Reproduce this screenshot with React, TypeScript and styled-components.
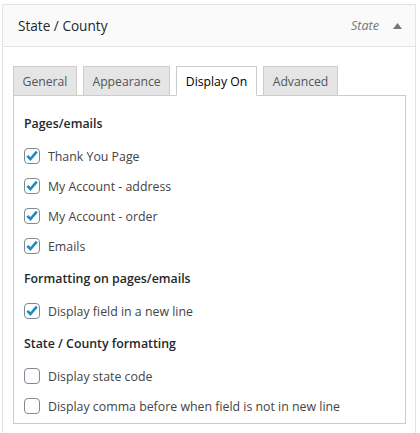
import React from 'react';
import styled, { createGlobalStyle } from 'styled-components';

const GlobalStyle = createGlobalStyle`
  body {
    margin: 0;
    background: #fff;
    font-family: 'Open Sans', 'Noto Sans', sans-serif;
    font-size: 12.35px;
    color: #444;
  }
`;

const FieldBox = styled.div`
  margin: 4px 4px 0 2px;
  border: 1px solid #e2e4e7;
  border-bottom: none;
  height: 429px;
  box-sizing: border-box;
`;

const FieldHeader = styled.div`
  height: 41px;
  display: flex;
  align-items: center;
  justify-content: space-between;
  padding: 0 13px 0 15px;
  background: #fafafa;
  border-bottom: 1px solid #e2e4e7;
`;

const FieldTitle = styled.span`
  font-size: 13.6px;
  font-weight: 500;
  color: #23282d;
`;

const FieldMeta = styled.div`
  display: flex;
  align-items: center;
  gap: 14px;
  color: #72777c;
`;

const FieldType = styled.em`
  font-size: 12.6px;
`;

const FieldBody = styled.div`
  padding: 19px 9px 0 10px;
`;

const TabList = styled.div`
  display: flex;
  gap: 6px;
  height: 30px;
  position: relative;
  z-index: 1;
`;

const Tab = styled.div<{ $active?: boolean; $width: number }>`
  width: ${(p) => p.$width}px;
  height: 30px;
  box-sizing: border-box;
  display: flex;
  align-items: center;
  justify-content: center;
  white-space: nowrap;
  border: 1px solid #ccc;
  border-bottom-color: ${(p) => (p.$active ? '#fff' : '#ccc')};
  background: ${(p) => (p.$active ? '#fff' : '#e5e5e5')};
  color: ${(p) => (p.$active ? '#000' : '#555')};
  font-size: 12.2px;
`;

const Panel = styled.div`
  border: 1px solid #ccc;
  margin-top: -1px;
  padding: 12px 10px 2px 10px;
`;

const SectionTitle = styled.div`
  font-weight: 600;
  color: #23282d;
  height: 30px;
  display: flex;
  align-items: center;
  margin: 2px 0 3px;

  &:first-child {
    margin-top: 0;
  }
`;

const CheckRow = styled.label`
  display: flex;
  align-items: center;
  gap: 8px;
  height: 30px;
  color: #444;
`;

const Box = styled.span`
  width: 16px;
  height: 16px;
  box-sizing: border-box;
  border: 1px solid #7e8993;
  border-radius: 4px;
  background: #fff;
  display: flex;
  align-items: center;
  justify-content: center;
  flex-shrink: 0;
`;

const Check: React.FC<{ label: string; checked?: boolean }> = ({ label, checked = false }) => (
  <CheckRow>
    <Box>
      {checked && (
        <svg width="14" height="14" viewBox="0 0 14 14">
          <path d="M2.3 6.8 L5.4 10 L11.8 2.6" fill="none" stroke="#1e8cbe" strokeWidth="2.6" />
        </svg>
      )}
    </Box>
    {label}
  </CheckRow>
);

const tabs = [
  { label: 'General', width: 64 },
  { label: 'Appearance', width: 87 },
  { label: 'Display On', width: 81, active: true },
  { label: 'Advanced', width: 75 },
];

export default function App() {
  return (
    <>
      <GlobalStyle />
      <FieldBox>
        <FieldHeader>
          <FieldTitle>State / County</FieldTitle>
          <FieldMeta>
            <FieldType>State</FieldType>
            <svg width="9" height="6" viewBox="0 0 9 6">
              <path d="M0 6 L4.5 0 L9 6 Z" fill="#72777c" />
            </svg>
          </FieldMeta>
        </FieldHeader>
        <FieldBody>
          <TabList>
            {tabs.map((t) => (
              <Tab key={t.label} $width={t.width} $active={t.active}>
                {t.label}
              </Tab>
            ))}
          </TabList>
          <Panel>
            <SectionTitle>Pages/emails</SectionTitle>
            <Check label="Thank You Page" checked />
            <Check label="My Account - address" checked />
            <Check label="My Account - order" checked />
            <Check label="Emails" checked />
            <SectionTitle>Formatting on pages/emails</SectionTitle>
            <Check label="Display field in a new line" checked />
            <SectionTitle>State / County formatting</SectionTitle>
            <Check label="Display state code" />
            <Check label="Display comma before when field is not in new line" />
          </Panel>
        </FieldBody>
      </FieldBox>
    </>
  );
}
